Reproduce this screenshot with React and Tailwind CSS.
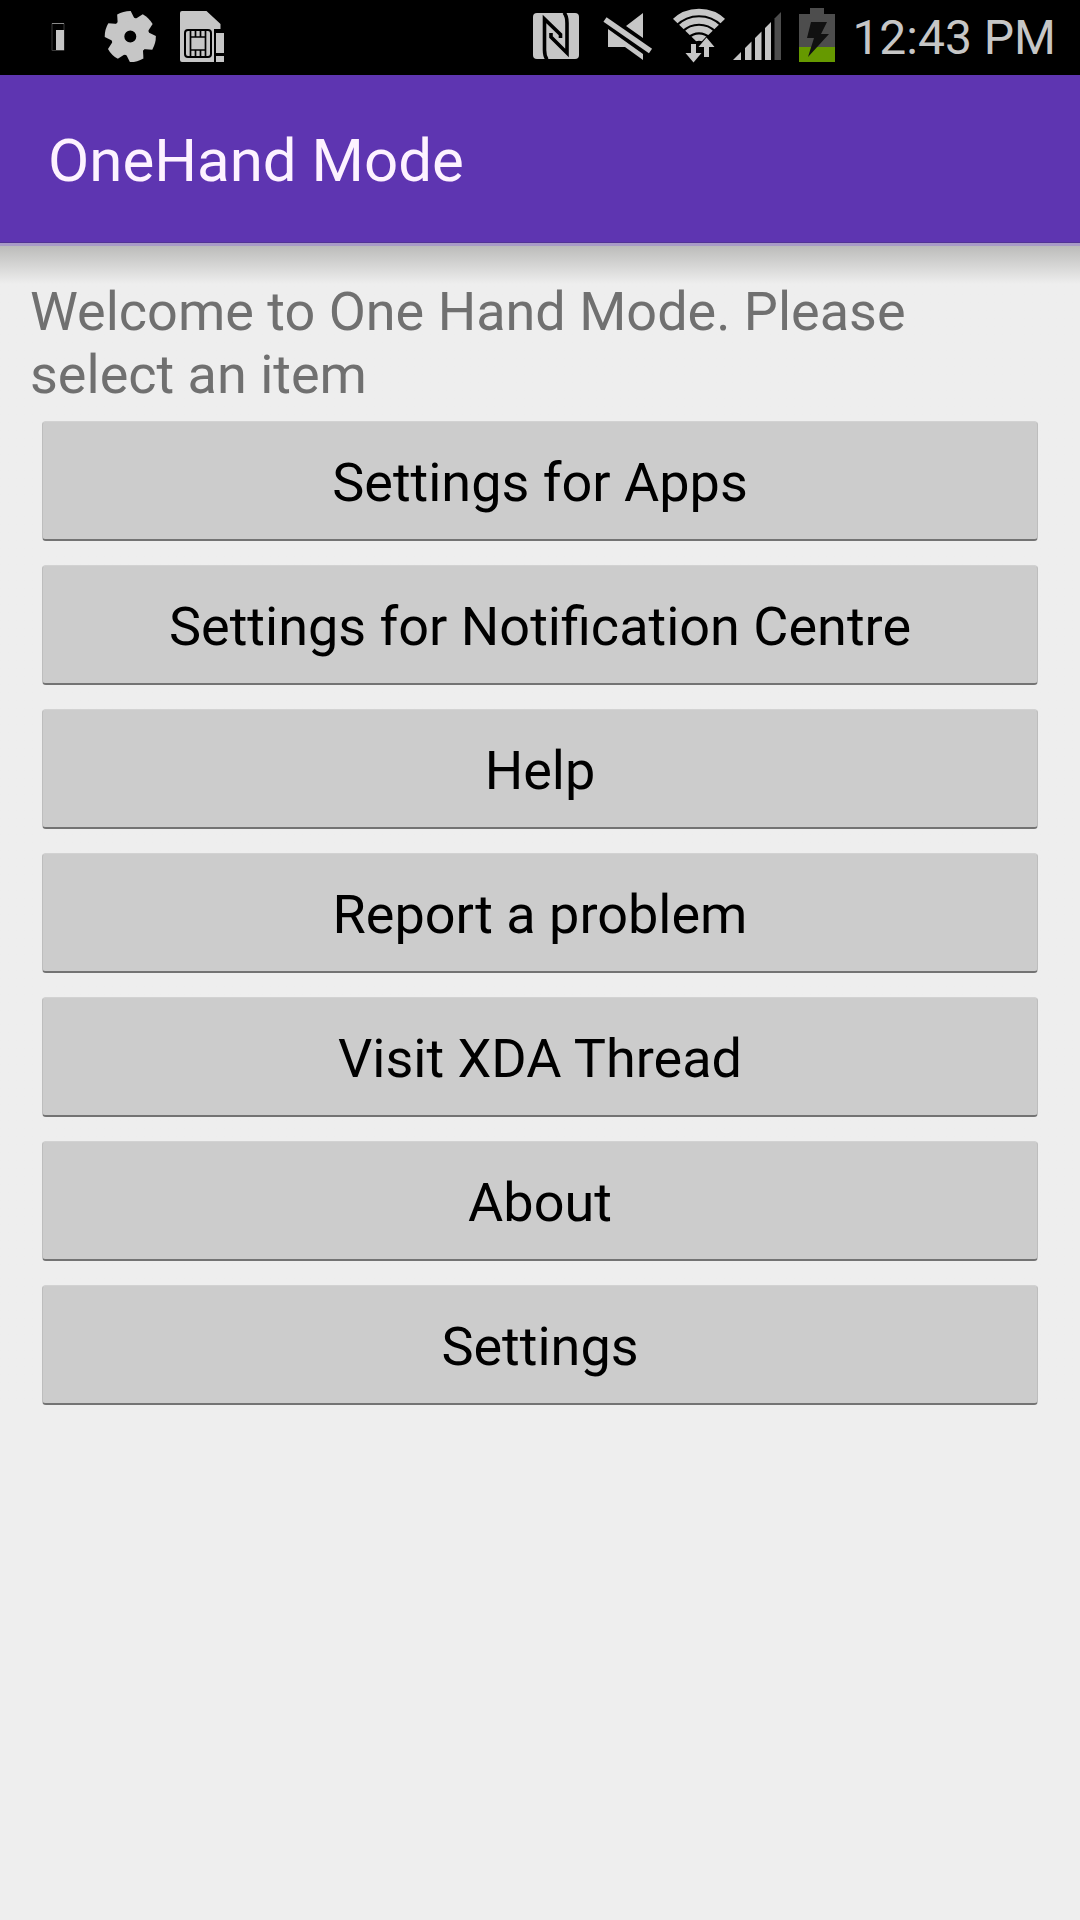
// App.jsx
const MENU_ITEMS = [
  "Settings for Apps",
  "Settings for Notification Centre",
  "Help",
  "Report a problem",
  "Visit XDA Thread",
  "About",
  "Settings",
];

const GEAR_TEETH = [-15, 45, 105, 165, 225, 285];

const LowBatteryIcon = () => (
  <svg viewBox="22 0 72 75" className="h-[75px] w-[72px]" aria-hidden="true">
    <path d="M52 23.5H64V50.5H52Z" fill="none" stroke="#3a3a3a" />
    <path d="M52 23.5H64" stroke="#8a8a8a" />
    <path d="M56 30h8v20h-8z" fill="#c6c6c6" />
  </svg>
);

const GearIcon = () => (
  <svg viewBox="94 0 72 75" className="h-[75px] w-[72px]" aria-hidden="true">
    <g transform="translate(130.3 36.5)" fill="#c6c6c6">
      <circle r="12.5" fill="none" stroke="#c6c6c6" strokeWidth="13" />
      {GEAR_TEETH.map((angle) => (
        <path
          key={angle}
          d="M-9 -15L-7 -24.6Q0 -26.6 7 -24.6L9 -15Z"
          transform={`rotate(${angle})`}
        />
      ))}
    </g>
  </svg>
);

const SimIcon = () => (
  <svg viewBox="166 0 72 75" className="h-[75px] w-[72px]" aria-hidden="true">
    <path
      d="M182 11H206.5L220.5 24V29H214V62H182Q180 62 180 60V13Q180 11 182 11Z"
      fill="#c6c6c6"
    />
    <rect
      x="185"
      y="30"
      width="26"
      height="27"
      rx="3"
      fill="none"
      stroke="#000"
      strokeWidth="2"
    />
    <path
      d="M190.5 30V57M205.5 30V57M190.5 37H205.5M190.5 50H205.5M195.5 30V37M200.5 30V37M195.5 50V57M200.5 50V57"
      fill="none"
      stroke="#000"
      strokeWidth="1.7"
    />
    <path d="M216 33h8v20h-8zM216 56h8v6h-8z" fill="#c6c6c6" />
  </svg>
);

const NfcIcon = () => (
  <svg viewBox="520 0 72 75" className="h-[75px] w-[72px]" aria-hidden="true">
    <rect x="533" y="13" width="46" height="46" rx="4" fill="#c6c6c6" />
    <path
      d="M547 59.5Q544.5 56 544.5 50V19L560.5 34.5V38"
      fill="none"
      stroke="#000"
      strokeWidth="3.6"
    />
    <path
      d="M564 12.5Q567 16 567 23V53L551 37V33"
      fill="none"
      stroke="#000"
      strokeWidth="3.6"
    />
  </svg>
);

const MuteIcon = () => (
  <svg viewBox="592 0 72 75" className="h-[75px] w-[72px]" aria-hidden="true">
    <path
      d="M643 13V38L626 26ZM608 29L643 54V60L625 47H608Z"
      fill="#c6c6c6"
    />
    <path d="M605 19L651 51" stroke="#000" strokeWidth="9" />
    <path d="M605 19.5L650.5 51" stroke="#c6c6c6" strokeWidth="5.5" />
  </svg>
);

const WifiIcon = () => (
  <svg viewBox="664 0 64 75" className="h-[75px] w-[64px]" aria-hidden="true">
    <clipPath id="wifi-wedge">
      <path d="M699 44L669 15V0H729V15Z" />
    </clipPath>
    <g
      clipPath="url(#wifi-wedge)"
      fill="none"
      stroke="#c6c6c6"
      strokeWidth="6.3"
    >
      <circle cx="699" cy="48" r="36" />
      <circle cx="699" cy="48" r="27.5" />
      <circle cx="699" cy="48" r="19" />
      <circle cx="699" cy="48" r="10.4" />
    </g>
    <path
      d="M691 44h5v9h5.5l-8 9.5l-8 -9.5h5.5zM704 57v-10h-5.5l8 -9.5l8 9.5h-5.5v10z"
      fill="#c6c6c6"
      stroke="#000"
      strokeWidth="1.5"
      paintOrder="stroke"
    />
  </svg>
);

const SignalIcon = () => (
  <svg viewBox="728 0 60 75" className="h-[75px] w-[60px]" aria-hidden="true">
    <path
      d="M733 60L741 52V60ZM745 60V48L751.5 41.5V60ZM755 60V38L761.5 31.5V60ZM765 60V28L771 22V60Z"
      fill="#c6c6c6"
    />
    <path d="M774.5 60V18.5L781 12V60Z" fill="#4d4d4d" />
  </svg>
);

const BatteryIcon = () => (
  <svg viewBox="788 0 60 75" className="h-[75px] w-[60px]" aria-hidden="true">
    <path d="M799 14H810V8H824V14H835V47H799Z" fill="#4d4d4d" />
    <path d="M799 47h36v15h-36z" fill="#669900" />
    <path d="M811 22H827L821 34H829L808 57L814 38H807Z" fill="#111" />
  </svg>
);

const StatusBar = () => (
  <div className="flex h-[75px] items-center justify-between bg-black pl-[22px] pr-6">
    <div className="flex">
      <LowBatteryIcon />
      <GearIcon />
      <SimIcon />
    </div>
    <div className="flex items-center">
      <NfcIcon />
      <MuteIcon />
      <WifiIcon />
      <SignalIcon />
      <BatteryIcon />
      <time className="pl-1 text-[48px] leading-[72px] text-[#c6c6c6]">
        12:43 PM
      </time>
    </div>
  </div>
);

const App = () => {
  return (
    <div className="min-h-screen bg-[#eeeeee] font-[Roboto,sans-serif]">
      <StatusBar />
      <header className="flex h-[168px] items-center border-b border-[#523394] bg-[#5e35b1] px-12 pt-1">
        <h1 className="text-[60px] leading-[70px] text-[#fdf2ff]">
          OneHand Mode
        </h1>
      </header>
      <div className="h-[3px] bg-[#a99bc6]" />
      <main className="bg-linear-to-b from-[#bcbcba] to-[#eeeeee] to-[38px] px-[30px] pt-[34px]">
        <p className="text-[54px] leading-[63px] text-[#707070]">
          Welcome to One Hand Mode. Please select an item
        </p>
        <nav className="mt-[15px] flex flex-col gap-6 px-3">
          {MENU_ITEMS.map((item) => (
            <button
              key={item}
              type="button"
              className="h-[120px] rounded-[4px] border border-b-2 border-x-[#bdbdbd] border-t-[#d2d2d2] border-b-[#737373] bg-[#cccccc] pt-1 text-[54px] leading-[63px] text-black"
            >
              {item}
            </button>
          ))}
        </nav>
      </main>
    </div>
  );
};

export default App;
